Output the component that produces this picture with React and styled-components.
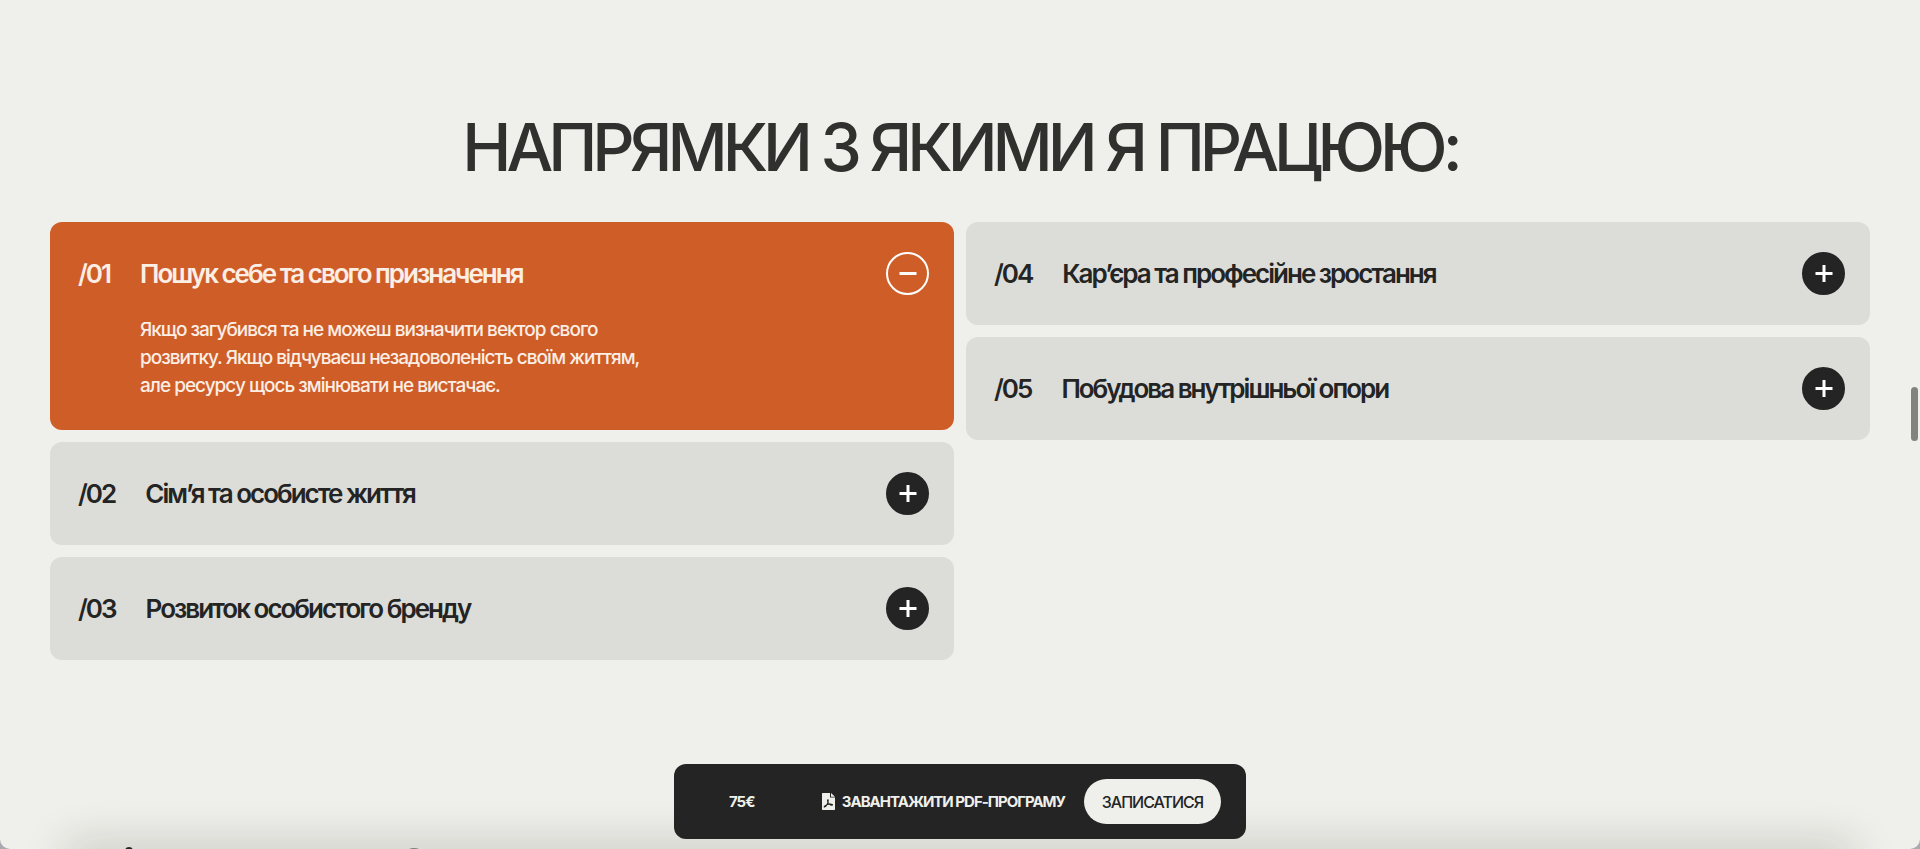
import React, { useState } from "react";
import styled, { createGlobalStyle } from "styled-components";

const GlobalStyle = createGlobalStyle`
  *, *::before, *::after { box-sizing: border-box; }
  html { background: #a9a9ae; }
  body {
    margin: 0;
    font-family: Inter, "Liberation Sans", sans-serif;
    color: #242424;
    overflow: hidden;
  }
  h1, h2, h3, p { margin: 0; }
  button { font: inherit; letter-spacing: inherit; color: inherit; border: 0; padding: 0; cursor: pointer; }
`;

const Page = styled.div`
  position: relative;
  height: 100vh;
  overflow: hidden;
  background: #eff0eb;
  border-radius: 0 0 10px 10px;
`;

const Section = styled.section`
  padding: 108px 50px 0;
`;

const Heading = styled.h2`
  font-size: 66px;
  line-height: 78px;
  font-weight: 500;
  letter-spacing: -5px;
  text-align: center;
  color: #30302e;
  margin-bottom: 36px;
`;

const Columns = styled.div`
  display: grid;
  grid-template-columns: 1fr 1fr;
  gap: 12px;
  align-items: start;
`;

const Column = styled.div`
  display: flex;
  flex-direction: column;
  gap: 12px;
`;

const Card = styled.article`
  padding: 30px 25px 30px 28px;
  border-radius: 12px;
  background: ${(p) => (p.$open ? "#cf5d28" : "#dcddd8")};
  color: ${(p) => (p.$open ? "#fbeee4" : "#242424")};
`;

const CardHead = styled.button`
  display: flex;
  align-items: center;
  gap: 30px;
  width: 100%;
  background: none;
  text-align: left;
  font-size: 26px;
  line-height: 42px;
  font-weight: 600;
  && { letter-spacing: -2px; }
`;

const CardNumber = styled.span`
  flex: none;
`;

const CardTitle = styled.span`
  flex: 1;
`;

const Toggle = styled.span`
  display: flex;
  align-items: center;
  justify-content: center;
  width: 43px;
  height: 43px;
  border-radius: 50%;
  color: #fff;
  background: ${(p) => (p.$open ? "transparent" : "#242424")};
  border: 2px solid ${(p) => (p.$open ? "#fff" : "#242424")};
`;

const CardBody = styled.p`
  max-width: 570px;
  padding-left: 62px;
  margin-top: 21px;
  font-size: 19px;
  line-height: 28px;
  font-weight: 500;
  letter-spacing: -1px;
`;

const BottomShade = styled.div`
  position: absolute;
  left: 70px;
  right: 70px;
  bottom: -20px;
  height: 20px;
  box-shadow: 0 0 44px 4px rgba(30, 32, 20, 0.22);
`;

const NextSectionEdge = styled.svg`
  position: absolute;
  left: 125px;
  bottom: 0;
`;

const Bar = styled.nav`
  position: absolute;
  left: 50%;
  bottom: 10px;
  transform: translateX(-50%);
  display: flex;
  align-items: center;
  width: 572px;
  padding: 15px 25px 15px 55px;
  border-radius: 12px;
  background: #242424;
  color: #eff0eb;
  font-size: 15px;
  line-height: 20px;
  font-weight: 700;
  letter-spacing: -1px;
`;

const Price = styled.span`
  flex: 1;
`;

const Download = styled.a`
  display: flex;
  align-items: center;
  gap: 7px;
  margin-right: 19px;
  color: inherit;
  text-decoration: none;
  white-space: nowrap;
`;

const SignUp = styled.button`
  width: 137px;
  height: 45px;
  border-radius: 23px;
  background: #eff0eb;
  && { color: #242424; font-size: 16px; font-weight: 500; }
`;

const ScrollThumb = styled.div`
  position: absolute;
  right: 2px;
  top: 387px;
  width: 7px;
  height: 54px;
  border-radius: 4px;
  background: #82837e;
`;

const left = [
  {
    id: "01",
    title: "Пошук себе та свого призначення",
    text: "Якщо загубився та не можеш визначити вектор свого розвитку. Якщо відчуваєш незадоволеність своїм життям, але ресурсу щось змінювати не вистачає.",
  },
  { id: "02", title: "Сім’я та особисте життя" },
  { id: "03", title: "Розвиток особистого бренду" },
];

const right = [
  { id: "04", title: "Кар’єра та професійне зростання" },
  { id: "05", title: "Побудова внутрішньої опори" },
];

function ToggleIcon({ open }) {
  return (
    <svg width="18" height="18" viewBox="0 0 18 18" stroke="currentColor" strokeWidth="3" aria-hidden="true">
      <path d={open ? "M0.5 8.5H17.5" : "M0.5 8.5H17.5M9 0V17"} />
    </svg>
  );
}

function PdfIcon() {
  return (
    <svg width="13" height="17" viewBox="0 0 13 17" aria-hidden="true">
      <path fill="currentColor" d="M0.5 0H8V4.5H13V16.5L12.5 17H0.5L0 16.5V0.5ZM9 0L13 3.7H9Z" />
      <path
        fill="none"
        stroke="#242424"
        strokeWidth="1.1"
        d="M2.6 14C4.5 13.2 6.4 9.5 6.2 7.3C6 6.2 5.2 6.8 5.6 8.2C6.1 10.2 8 12.3 10 12.2C11.3 11.8 10 10.8 8 11C6 11.2 4.4 11.8 3.2 12.6C2 13.4 2 14.2 2.6 14Z"
      />
    </svg>
  );
}

function AccordionItem({ item, open, onToggle }) {
  return (
    <Card $open={open}>
      <CardHead type="button" aria-expanded={open} onClick={onToggle}>
        <CardNumber>/{item.id}</CardNumber>
        <CardTitle>{item.title}</CardTitle>
        <Toggle $open={open}>
          <ToggleIcon open={open} />
        </Toggle>
      </CardHead>
      {open && item.text && <CardBody>{item.text}</CardBody>}
    </Card>
  );
}

export default function App() {
  const [openId, setOpenId] = useState("01");
  return (
    <>
      <GlobalStyle />
      <Page>
        <Section>
          <Heading>НАПРЯМКИ З ЯКИМИ Я ПРАЦЮЮ:</Heading>
          <Columns>
            {[left, right].map((items, i) => (
              <Column key={i}>
                {items.map((item) => (
                  <AccordionItem
                    key={item.id}
                    item={item}
                    open={openId === item.id}
                    onToggle={() => setOpenId(openId === item.id ? null : item.id)}
                  />
                ))}
              </Column>
            ))}
          </Columns>
        </Section>
        <BottomShade />
        <NextSectionEdge width="296" height="2" viewBox="0 0 296 2" aria-hidden="true">
          <circle cx="4" cy="4" r="4" fill="#242424" />
          <ellipse cx="289" cy="7" rx="9" ry="6" fill="#7d7d7a" />
        </NextSectionEdge>
        <Bar>
          <Price>75€</Price>
          <Download href="#program">
            <PdfIcon />
            ЗАВАНТАЖИТИ PDF-ПРОГРАМУ
          </Download>
          <SignUp type="button">ЗАПИСАТИСЯ</SignUp>
        </Bar>
        <ScrollThumb />
      </Page>
    </>
  );
}
